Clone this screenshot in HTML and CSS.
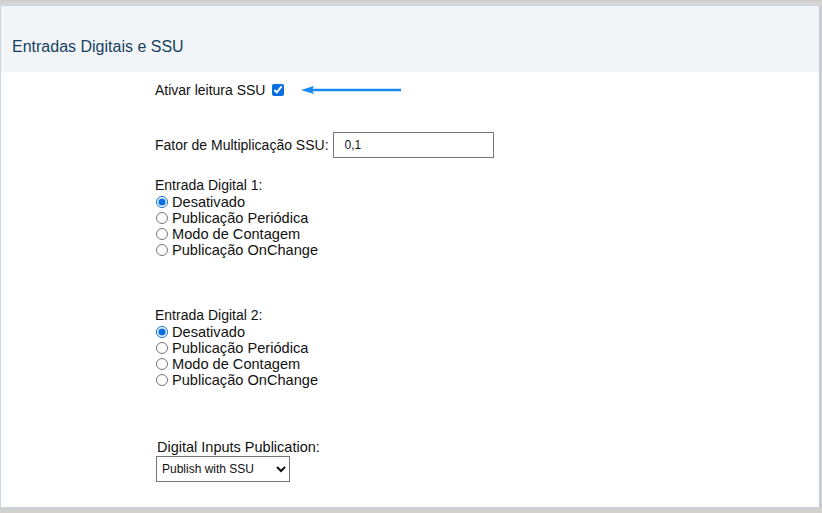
FILE: index.html
```html
<!DOCTYPE html>
<html>
<head>
	<title>Entradas Digitais e SSU</title>
	<meta charset="utf-8">
	<link rel="stylesheet" href="styles.css">
</head>
<body>
	<div class="topbar"></div>
	<div class="card">
		<div class="card-header">Entradas Digitais e SSU</div>
		<div class="card-body">
			<div class="row-ssu">
				<label>Ativar leitura SSU <input type="checkbox" checked></label>
				<svg class="arrow" width="100" height="10" viewBox="0 0 100 10">
					<path d="M9 5 H100" stroke="#1487f5" stroke-width="2.6" fill="none"/>
					<path d="M0 5 L13 1 L11 5 L13 9 Z" fill="#1487f5"/>
				</svg>
			</div>

			<div class="row-factor">
				<span>Fator de Multiplicação SSU:</span><input class="factor" type="text" value="0,1">
			</div>

			<div class="group">
				<div class="group-title">Entrada Digital 1:</div>
				<label class="opt"><input type="radio" name="di1" checked>Desativado</label>
				<label class="opt"><input type="radio" name="di1">Publicação Periódica</label>
				<label class="opt"><input type="radio" name="di1">Modo de Contagem</label>
				<label class="opt"><input type="radio" name="di1">Publicação OnChange</label>
			</div>

			<div class="group group-2">
				<div class="group-title">Entrada Digital 2:</div>
				<label class="opt"><input type="radio" name="di2" checked>Desativado</label>
				<label class="opt"><input type="radio" name="di2">Publicação Periódica</label>
				<label class="opt"><input type="radio" name="di2">Modo de Contagem</label>
				<label class="opt"><input type="radio" name="di2">Publicação OnChange</label>
			</div>

			<div class="publish">
				<div class="publish-title">Digital Inputs Publication:</div>
				<select class="publish-select">
					<option>Publish with SSU</option>
					<option>Publish without SSU</option>
				</select>
			</div>
		</div>
	</div>
</body>
</html>
```

FILE: styles.css
```css
html, body{
	margin: 0;
	padding: 0;
}
body{
	background: #d2d0ce;
	font-family: "Liberation Sans", Arial, sans-serif;
	color: #111;
	width: 822px;
	height: 513px;
	overflow: hidden;
}
.topbar{
	height: 5px;
	background: linear-gradient(to bottom, #cfcdcb, #dcdad8);
}
.card{
	width: 821px;
	height: 503px;
	background: #fff;
	border: 1px solid #c9d5e0;
	border-right: 2px solid #c3ccd6;
	box-sizing: border-box;
}
.card-header{
	background: #f2f5f7;
	color: #173f61;
	font-size: 16px;
	line-height: 16px;
	padding: 33px 11px 17px;
}
.card-body{
	padding: 10px 0 0 154px;
	font-size: 14px;
	line-height: 16px;
}
.row-ssu{
	display: flex;
	align-items: center;
	height: 16px;
}
.row-ssu input{
	width: 12px;
	height: 12px;
	margin: 0 0 0 3px;
	vertical-align: -1px;
	accent-color: #0b6fe0;
}
.arrow{
	margin-left: 17px;
}
.row-factor{
	margin-top: 34px;
	display: flex;
	align-items: center;
	height: 26px;
}
.factor{
	width: 161px;
	height: 26px;
	box-sizing: border-box;
	border: 1px solid #767676;
	margin: 0 0 0 4px;
	padding: 0 11px;
	font-family: "Liberation Sans", Arial, sans-serif;
	font-size: 12px;
	color: #111;
}
.group{
	margin-top: 19px;
}
.group-2{
	margin-top: 49px;
}
.group-title{
	line-height: 17px;
}
.opt{
	display: flex;
	align-items: center;
	height: 16px;
	font-size: 14.6px;
}
.opt input{
	width: 12px;
	height: 12px;
	margin: 0 4px 0 1px;
	accent-color: #0b6fe0;
}
.publish{
	margin-top: 51px;
}
.publish-title{
	padding-left: 2px;
	font-size: 14.5px;
}
.publish-select{
	margin-top: 1px;
	margin-left: 1px;
	width: 134px;
	height: 26px;
	border: 1px solid #767676;
	border-radius: 0;
	background: #fff;
	font-family: "Liberation Sans", Arial, sans-serif;
	font-size: 12px;
	color: #111;
	padding: 0 1px;
}
```
